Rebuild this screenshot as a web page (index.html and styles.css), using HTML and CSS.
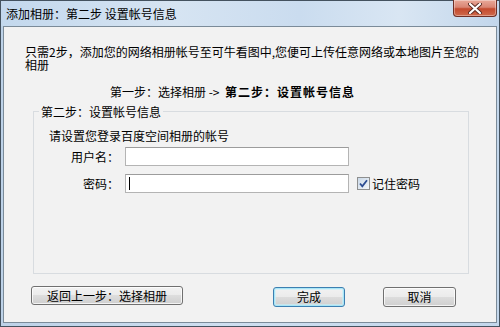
FILE: index.html
```html
<!DOCTYPE html>
<html lang="zh-CN">
<head>
  <meta charset="UTF-8">
  <title>添加相册：第二步 设置帐号信息</title>
  <link rel="stylesheet" href="styles.css">
</head>
<body>
  <!-- Dialog window -->
  <div class="window">
    <div class="titlebar">
      <span class="title">添加相册：第二步 设置帐号信息</span>
      <span class="close-btn">
        <svg width="14" height="11" viewBox="0 0 14 11">
          <path d="M2 1 L12 10 M12 1 L2 10" stroke="#5a2a22" stroke-width="4" stroke-linecap="round"/>
          <path d="M2 1 L12 10 M12 1 L2 10" stroke="#fff" stroke-width="2.2" stroke-linecap="round"/>
        </svg>
      </span>
    </div>

    <div class="client">
      <p class="intro">只需2步，添加您的网络相册帐号至可牛看图中,您便可上传任意网络或本地图片至您的相册</p>
      <p class="steps">第一步：选择相册 -&gt;&nbsp; <b>第二步：设置帐号信息</b></p>

      <!-- Account group -->
      <fieldset class="group">
        <legend>第二步：设置帐号信息</legend>
        <div class="group-body">
          <p class="hint">请设置您登录百度空间相册的帐号</p>
          <div class="field-row">
            <span class="field-label">用户名：</span>
            <div class="textbox"></div>
          </div>
          <div class="field-row">
            <span class="field-label">密码：</span>
            <div class="textbox"><span class="caret"></span></div>
            <span class="remember">
              <svg class="checkbox" width="13" height="13" viewBox="0 0 13 13">
                <defs>
                  <linearGradient id="cbg" x1="0" y1="0" x2="1" y2="1">
                    <stop offset="0" stop-color="#c9d8e8"/>
                    <stop offset="1" stop-color="#f4f7fa"/>
                  </linearGradient>
                </defs>
                <rect x="0.5" y="0.5" width="12" height="12" fill="url(#cbg)" stroke="#8e8f8f"/>
                <path d="M3 6.5 L5.3 9.3 L10 3.2" fill="none" stroke="#2b4c92" stroke-width="1.8"/>
              </svg>
              记住密码
            </span>
          </div>
        </div>
      </fieldset>

      <div class="buttons">
        <button class="btn btn-back">返回上一步：选择相册</button>
        <button class="btn btn-done">完成</button>
        <button class="btn btn-cancel">取消</button>
      </div>
    </div>
  </div>
</body>
</html>
```

FILE: styles.css
```css
* {
  box-sizing: border-box;
}
body {
  margin: 0;
  font-family: "Noto Sans CJK SC", sans-serif;
  font-size: 12px;
  color: #000;
  background: #fff;
}
.window {
  width: 500px;
  height: 327px;
  border: 1px solid #44525f;
  background: linear-gradient(90deg, #bdd2e8, #cfdff0 45%, #c3d7ec);
  display: flex;
  flex-direction: column;
}
.titlebar {
  height: 25px;
  display: flex;
  justify-content: space-between;
  align-items: flex-start;
  background: linear-gradient(90deg, #c3d8ed 0%, #d6e4f2 35%, #cadcef 60%, #d9e6f3 80%, #c2d6eb 100%);
}
.title {
  padding: 6px 0 0 5px;
  line-height: 13px;
}
.close-btn {
  width: 44px;
  height: 17px;
  margin: -1px 2px 0 0;
  border: 1px solid #6e2f26;
  border-top: none;
  border-radius: 0 0 4px 4px;
  background: linear-gradient(#e9a999 0%, #d98573 45%, #c44a2e 55%, #cf6a4c 100%);
  box-shadow: inset 0 0 0 1px rgba(255,255,255,0.35);
  display: flex;
  align-items: center;
  justify-content: center;
}
.client {
  flex: 1;
  margin: 0 2px 3px;
  border: 1px solid #7b8b99;
  background: #f2f2f2;
  padding-top: 18px;
}
.intro {
  margin: 0 0 0 21px;
  width: 460px;
  line-height: 13px;
}
.steps {
  margin: 14px 0 0 106px;
  line-height: 13px;
}
.steps b {
  letter-spacing: 1px;
}
.group {
  margin: 7px 0 0 29px;
  width: 436px;
  height: 169px;
  padding: 0;
  border: 1px solid #d8dce0;
  min-inline-size: 0;
}
.group legend {
  margin-left: 5px;
  padding: 0 2px;
  line-height: 13px;
}
.group-body {
  padding: 11px 0 0 15px;
}
.hint {
  margin: 0;
  line-height: 13px;
}
.field-row {
  display: flex;
  align-items: center;
  height: 19px;
  margin-top: 5px;
}
.field-row + .field-row {
  margin-top: 8px;
}
.field-label {
  width: 70px;
  text-align: right;
  margin-right: 6px;
}
.textbox {
  width: 224px;
  height: 19px;
  border: 1px solid #b4b4b4;
  border-top-color: #9c9c9c;
  background: #fff;
  padding-left: 3px;
  display: flex;
  align-items: center;
}
.caret {
  width: 1px;
  height: 13px;
  background: #000;
}
.remember {
  display: flex;
  align-items: center;
  margin-left: 8px;
  gap: 2px;
}
.buttons {
  display: flex;
  align-items: flex-start;
  margin: 12px 0 0 27px;
}
.btn {
  height: 19px;
  padding: 0;
  font: inherit;
  font-size: 12px;
  line-height: 16px;
  color: #000;
  border: 1px solid #707070;
  border-radius: 3px;
  background: linear-gradient(#f2f2f2 0%, #ebebeb 50%, #dddddd 50%, #cfcfcf 100%);
  box-shadow: inset 0 0 0 1px rgba(255,255,255,0.75);
}
.btn-back {
  width: 152px;
}
.btn-done {
  width: 72px;
  height: 20px;
  margin: 1px 0 0 90px;
  border-color: #3c7fb1;
  box-shadow: inset 0 0 0 1px #a8e6f7, inset 0 0 0 2px rgba(200,240,252,0.6);
}
.btn-cancel {
  width: 73px;
  height: 20px;
  margin: 1px 0 0 38px;
}
```
